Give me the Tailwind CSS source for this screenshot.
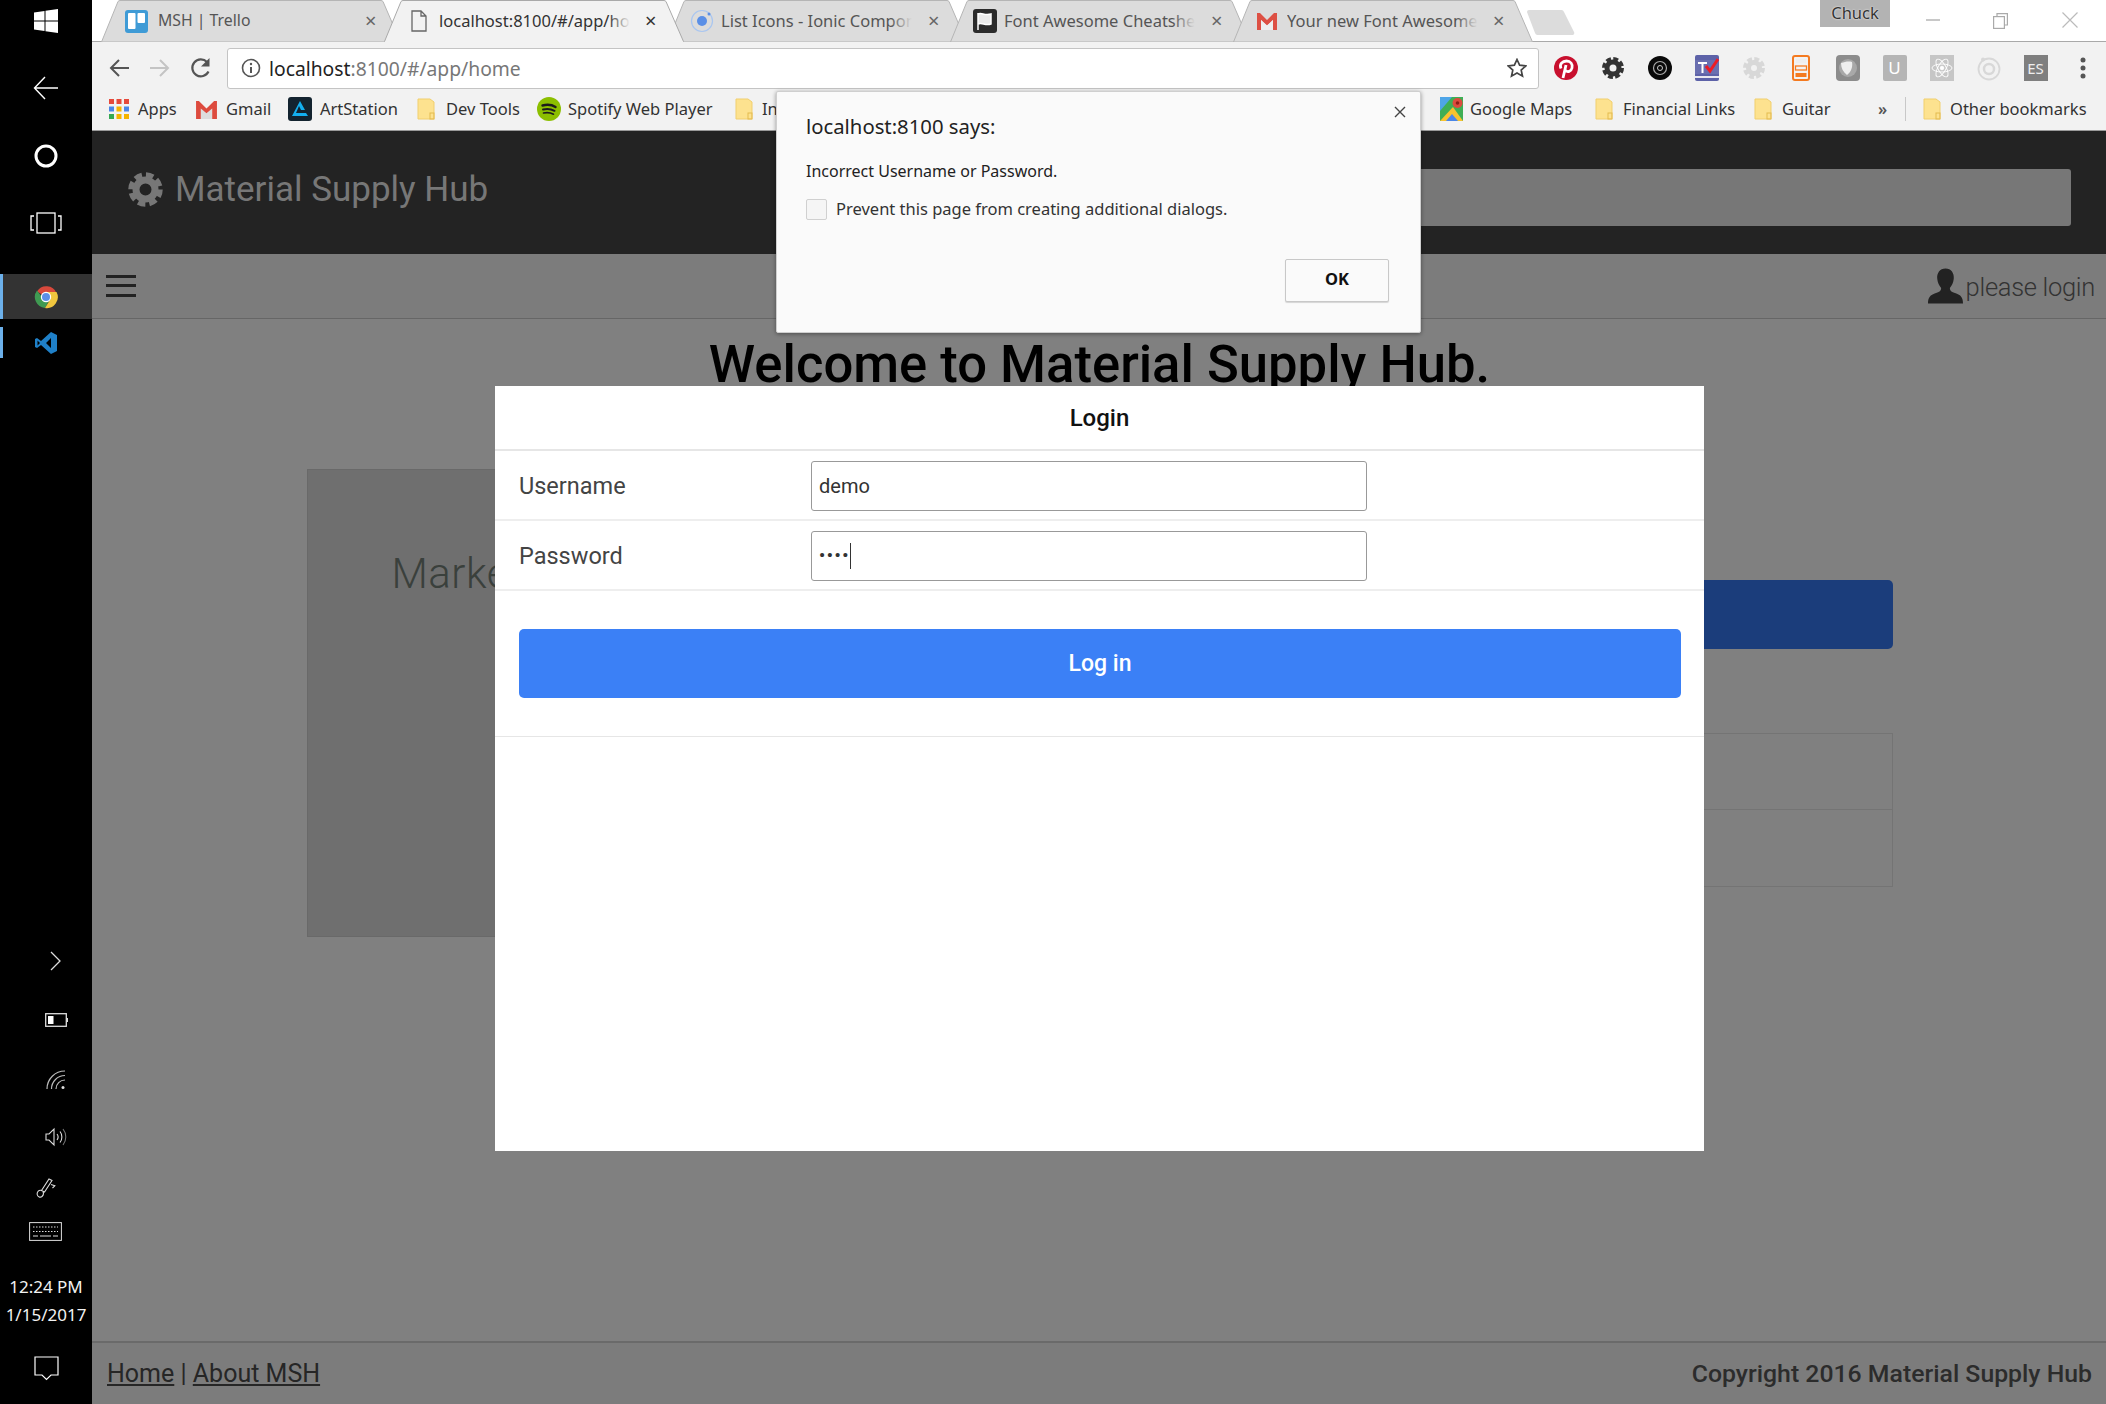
<!DOCTYPE html>
<html>
<head>
<meta charset="utf-8">
<script src="https://cdn.jsdelivr.net/npm/@tailwindcss/browser@4"></script>
<title>Material Supply Hub</title>
</head>
<body class="m-0 overflow-hidden bg-black">
<div class="relative flex w-[2106px] h-[1404px] overflow-hidden font-['Roboto',sans-serif]">

  <!-- Tablet-mode taskbar -->
  <aside class="flex flex-col w-[92px] h-full bg-black text-white shrink-0">
    <div class="flex items-center justify-center h-[42px]">
      <svg width="24" height="24" viewBox="0 0 24 24" fill="#fff"><path d="M0 3.5 10.5 2v9.500H0zM11.500 1.800 24 0v11.500H11.500zM0 12.500h10.500V22L0 20.500zM11.500 12.500H24V24l-12.500-1.800z"/></svg>
    </div>
    <div class="flex items-center justify-center h-[92px]">
      <svg width="26" height="24" viewBox="0 0 26 24" fill="none" stroke="#fff" stroke-width="1.400"><path d="M25 12H1.500M12 1 1.500 12 12 23"/></svg>
    </div>
    <div class="flex items-center justify-center h-[44px]">
      <svg width="24" height="24" viewBox="0 0 24 24" fill="none" stroke="#fff" stroke-width="3"><circle cx="12" cy="12" r="10"/></svg>
    </div>
    <div class="flex items-center justify-center h-[90px]">
      <svg width="32" height="22" viewBox="0 0 32 22" fill="none" stroke="#fff" stroke-width="1.300"><rect x="7" y="1" width="18" height="20"/><path d="M4 4H1v14h3M28 4h3v14h-3"/></svg>
    </div>
    <div class="flex items-center justify-center h-[45px] mt-[6px] bg-[#333] border-l-[3px] border-[#6cb0ea] pr-[3px]">
      <svg width="24" height="24" viewBox="0 0 24 24">
        <path d="M12 12 3 6.500A11 11 0 0 1 22.500 8H12z" fill="#d8493c"/>
        <path d="M3 5.500A11 11 0 0 0 11 23l5-9-4-2H8z" fill="#3f9a52"/>
        <path d="M12 7h10.500A11 11 0 0 1 11 23l5.500-9z" fill="#f0c63e"/>
        <circle cx="12" cy="12" r="5.200" fill="#fff"/><circle cx="12" cy="12" r="4" fill="#5b8fe8"/>
      </svg>
    </div>
    <div class="flex items-center justify-center h-[31px] mt-[8px] border-l-[3px] border-[#6cb0ea] pr-[3px]">
      <svg width="24" height="24" viewBox="0 0 24 24"><path d="M17 1 23 4v16l-6 3L7 14l-4 3-2-1V8l2-1 4 3zM17 7l-5 5 5 5zM3.500 9.500v5L6 12z" fill="#1f80c8" fill-rule="evenodd"/></svg>
    </div>
    <div class="flex-1"></div>
    <div class="flex items-center justify-center h-[44px] pl-[20px]">
      <svg width="12" height="20" viewBox="0 0 12 20" fill="none" stroke="#ddd" stroke-width="1.300"><path d="m1 1 9 9-9 9"/></svg>
    </div>
    <div class="flex items-center justify-center h-[74px] pl-[20px]">
      <svg width="23" height="14" viewBox="0 0 23 14" fill="none"><rect x=".7" y=".7" width="20.600" height="12.600" stroke="#ddd" stroke-width="1.300"/><rect x="3" y="3" width="5.500" height="8" fill="#fff"/><rect x="21.500" y="5" width="1.500" height="4" fill="#ddd"/></svg>
    </div>
    <div class="flex items-center justify-center h-[46px] pl-[20px]">
      <svg width="20" height="20" viewBox="0 0 20 20" fill="none" stroke="#bbb" stroke-width="1.200"><path d="M1 19A18 18 0 0 1 19 1M5.500 19A13.500 13.500 0 0 1 19 5.500M10 19a9 9 0 0 1 9-9"/><circle cx="17" cy="17.500" r="1.500" fill="#ddd" stroke="none"/></svg>
    </div>
    <div class="flex items-center justify-center h-[68px] pl-[20px]">
      <svg width="22" height="20" viewBox="0 0 22 20" fill="none" stroke="#ddd" stroke-width="1.100"><path d="M1 7h3l5-5v16l-5-5H1z"/><path d="M12 7c1.500 2 1.500 4 0 6M15 4.500c2.500 3 2.500 8 0 11"/><path d="M18 2c3.700 4.500 3.700 11.500 0 16" stroke="#777"/></svg>
    </div>
    <div class="flex items-center justify-center h-[34px] pr-[1px]">
      <svg width="20" height="20" viewBox="0 0 20 20" fill="none" stroke="#ddd" stroke-width="1.100"><path d="M13 1 16 2.500 8.500 14 5.500 12.500zM15 6.500l3.800 1.300-2.300 2.200M5.500 12.500C3 11.500.8 14 1.200 16.500S4.500 19.800 6 18.500s1.800-3 1-4.800"/></svg>
    </div>
    <div class="flex items-center justify-center h-[52px] pr-[1px]">
      <svg width="33" height="19" viewBox="0 0 33 19" fill="none" stroke="#ddd"><rect x=".6" y=".6" width="31.800" height="17.800"/><path d="M4 5h25M4 9.500h25" stroke-dasharray="1.500 1.500"/><path d="M4 14h5M11 14h11M24 14h5" stroke-width="1.200"/></svg>
    </div>
    <div class="flex flex-col items-center font-['Noto_Sans',sans-serif] text-[17px] leading-[28px] text-[#f2f2f2] pt-[16px]">
      <span class="whitespace-nowrap">12:24 PM</span>
      <span class="whitespace-nowrap">1/15/2017</span>
    </div>
    <div class="flex items-center justify-center h-[75px] pt-[3px]">
      <svg width="25" height="25" viewBox="0 0 25 25" fill="none" stroke="#fff" stroke-width="1.200"><path d="M1 1h23v18h-7l-4.500 4.500L8 19H1z"/></svg>
    </div>
  </aside>

  <main class="flex flex-col flex-1 min-w-0 bg-[#808080]">
    <!-- Browser chrome -->
    <div class="relative z-10 flex h-[42px] bg-white pl-[9px] font-['Noto_Sans',sans-serif] text-[16.500px]">
      <div class="absolute left-0 right-0 bottom-0 h-[1px] bg-[#a9a9a9]"></div>

      <div class="relative w-[300px] h-[42px] -mr-[17px] shrink-0 text-[#555]">
        <svg class="absolute inset-0" width="300" height="42" viewBox="0 0 300 42"><path d="M.5 42 17 1.500A3 3 0 0 1 19 .5h261a3 3 0 0 1 2 1L299.500 42z" fill="#dcdcdc" stroke="#b5b5b5"/></svg>
        <div class="relative flex items-center h-full pl-[24px]">
          <svg class="shrink-0" width="23" height="23" viewBox="0 0 23 23"><rect width="23" height="23" rx="3" fill="#3f9bd6"/><rect x="3" y="3" width="7.500" height="16" rx="1" fill="#fff"/><rect x="12.500" y="3" width="7.500" height="10" rx="1" fill="#fff"/></svg>
          <div class="w-[198px] ml-[10px] whitespace-nowrap overflow-hidden text-[15.800px]">MSH | Trello</div>
          <span class="ml-[9px] text-[20px] leading-none text-[#666]">×</span>
        </div>
      </div>

      <div class="relative z-10 w-[300px] h-[42px] -mr-[17px] shrink-0 text-[#333]">
        <svg class="absolute inset-0" width="300" height="42" viewBox="0 0 300 42"><path d="M0 41.500H.5L17 1.500A3 3 0 0 1 19 .5h261a3 3 0 0 1 2 1L299.500 41.500h.5v.5H0z" fill="#f2f2f2"/><path d="M0 41.500H.5L17 1.500A3 3 0 0 1 19 .5h261a3 3 0 0 1 2 1L299.500 41.500H300" fill="none" stroke="#a9a9a9"/></svg>
        <div class="relative flex items-center h-full pl-[27px]">
          <svg class="shrink-0" width="16" height="22" viewBox="0 0 16 22" fill="none" stroke="#666" stroke-width="1.300"><path d="M1 1h9l5 5v15H1zM10 1v5h5"/></svg>
          <div class="relative w-[191px] ml-[12px] whitespace-nowrap overflow-hidden">localhost:8100/#/app/home<div class="absolute right-0 top-0 bottom-0 w-[22px] bg-gradient-to-r from-transparent to-[#f2f2f2]"></div></div>
          <span class="ml-[15px] text-[20px] leading-none text-[#333]">×</span>
        </div>
      </div>

      <div class="relative w-[300px] h-[42px] -mr-[17px] shrink-0 text-[#555]">
        <svg class="absolute inset-0" width="300" height="42" viewBox="0 0 300 42"><path d="M.5 42 17 1.500A3 3 0 0 1 19 .5h261a3 3 0 0 1 2 1L299.500 42z" fill="#dcdcdc" stroke="#b5b5b5"/></svg>
        <div class="relative flex items-center h-full pl-[23px]">
          <svg class="shrink-0" width="24" height="24" viewBox="0 0 24 24" fill="none"><circle cx="12" cy="12" r="10.500" stroke="#a9c6f0" stroke-width="1.200"/><circle cx="12" cy="12" r="5" fill="#5a8fe6"/><circle cx="19" cy="5" r="1.500" fill="#5a8fe6"/></svg>
          <div class="relative w-[191px] ml-[7px] whitespace-nowrap overflow-hidden">List Icons - Ionic Components<div class="absolute right-0 top-0 bottom-0 w-[22px] bg-gradient-to-r from-transparent to-[#dcdcdc]"></div></div>
          <span class="ml-[16px] text-[20px] leading-none text-[#666]">×</span>
        </div>
      </div>

      <div class="relative w-[300px] h-[42px] -mr-[17px] shrink-0 text-[#555]">
        <svg class="absolute inset-0" width="300" height="42" viewBox="0 0 300 42"><path d="M.5 42 17 1.500A3 3 0 0 1 19 .5h261a3 3 0 0 1 2 1L299.500 42z" fill="#dcdcdc" stroke="#b5b5b5"/></svg>
        <div class="relative flex items-center h-full pl-[23px]">
          <svg class="shrink-0" width="24" height="24" viewBox="0 0 24 24"><rect width="24" height="24" rx="3" fill="#2b2b2b"/><path d="M5 4v17M5 5c4-2 6 2 13 0v10c-6 2-9-2-13 0z" stroke="#fff" stroke-width="1.500" fill="#fff" fill-opacity=".9"/></svg>
          <div class="relative w-[191px] ml-[7px] whitespace-nowrap overflow-hidden">Font Awesome Cheatsheet<div class="absolute right-0 top-0 bottom-0 w-[22px] bg-gradient-to-r from-transparent to-[#dcdcdc]"></div></div>
          <span class="ml-[16px] text-[20px] leading-none text-[#666]">×</span>
        </div>
      </div>

      <div class="relative w-[300px] h-[42px] shrink-0 text-[#555]">
        <svg class="absolute inset-0" width="300" height="42" viewBox="0 0 300 42"><path d="M.5 42 17 1.500A3 3 0 0 1 19 .5h261a3 3 0 0 1 2 1L299.500 42z" fill="#dcdcdc" stroke="#b5b5b5"/></svg>
        <div class="relative flex items-center h-full pl-[23px]">
          <svg class="shrink-0" width="22" height="22" viewBox="0 0 22 22"><path d="M1 3h3l7 7 7-7h3v17h-4V10l-6 5.500L5 10v10H1z" fill="#dd5044"/><path d="M5 10v10h12V10l-6 5.500z" fill="#eee"/></svg>
          <div class="relative w-[191px] ml-[9px] whitespace-nowrap overflow-hidden">Your new Font Awesome Kit<div class="absolute right-0 top-0 bottom-0 w-[22px] bg-gradient-to-r from-transparent to-[#dcdcdc]"></div></div>
          <span class="ml-[15px] text-[20px] leading-none text-[#666]">×</span>
        </div>
      </div>

      <svg class="ml-[-7px] mt-[10px] shrink-0 relative" width="50" height="25" viewBox="0 0 50 25"><path d="M1 2a2 2 0 0 1 2-2h32a3 3 0 0 1 3 2l10 20a2 2 0 0 1-2 3H12a3 3 0 0 1-3-2z" fill="#dcdcdc"/></svg>

      <div class="flex-1"></div>
      <div class="relative flex items-start justify-center w-[70px] h-[27px] bg-[#b3b3b3] text-[#333] text-[16.500px] leading-[25px] [text-shadow:0_0_2px_#fff] ml-[-8px]">Chuck</div>
      <div class="relative flex items-start w-[216px] h-[41px]">
        <svg class="absolute left-[36px] top-[19px]" width="14" height="2"><rect width="14" height="2" fill="#c8c8c8"/></svg>
        <svg class="absolute left-[103px] top-[13px]" width="15" height="16" viewBox="0 0 15 16" fill="none" stroke="#aaa" stroke-width="1.200"><rect x=".6" y="3.600" width="10.800" height="11.800"/><path d="M4 3.500V.6h10.400V12h-3"/></svg>
        <svg class="absolute left-[172px] top-[12px]" width="16" height="16" viewBox="0 0 16 16" fill="none" stroke="#bbb" stroke-width="1.200"><path d="m.5.500 15 15M15.500.500l-15 15"/></svg>
      </div>
    </div>

    <div class="relative flex items-center h-[46px] bg-[#f2f2f2] pl-[6px] pt-[6px]">
      <div class="flex items-center justify-center w-[41px]"><svg width="20" height="18" viewBox="0 0 20 18" fill="none" stroke="#555" stroke-width="2"><path d="M20 9H2M10 1 2 9l8 8"/></svg></div>
      <div class="flex items-center justify-center w-[41px]"><svg width="20" height="18" viewBox="0 0 20 18" fill="none" stroke="#c4c4c4" stroke-width="2"><path d="M0 9h18M10 1l8 8-8 8"/></svg></div>
      <div class="flex items-center justify-center w-[41px]"><svg width="22" height="22" viewBox="0 0 22 22" fill="none" stroke="#555" stroke-width="2.200"><path d="M18.500 14.500A8.500 8.500 0 1 1 17 5"/><path d="M19.500 1v8.500H11" stroke="none" fill="#555"/></svg></div>
      <div class="flex items-center justify-between w-[1312px] h-[41px] ml-[6px] bg-white border border-[#c4c4c4] rounded-[3px] pl-[13px] pr-[11px] font-['Noto_Sans',sans-serif]">
        <div class="flex items-center">
          <svg width="20" height="20" viewBox="0 0 20 20" fill="none" stroke="#555" stroke-width="1.600"><circle cx="10" cy="10" r="8.500"/><path d="M10 9v6" stroke-width="2"/><circle cx="10" cy="6" r="1.200" fill="#555" stroke="none"/></svg>
          <span class="ml-[8px] pt-[2px] text-[19.300px] text-[#777]"><span class="text-[#222]">localhost</span>:8100/#/app/home</span>
        </div>
        <svg width="20" height="20" viewBox="0 0 20 20" fill="none" stroke="#444" stroke-width="1.700"><path d="m10 1.500 2.600 5.700 6.200.7-4.600 4.200 1.300 6.100-5.500-3.100-5.500 3.100 1.300-6.100L1.200 7.900l6.200-.7z"/></svg>
      </div>
      <div class="flex items-center ml-[3px]">
        <div class="flex items-center justify-center w-[47px]"><svg width="24" height="24" viewBox="0 0 24 24"><circle cx="12" cy="12" r="12" fill="#c8102e"/><path d="M9 22l3-13M7 12.500C5 8 8.500 5 12.500 5S19 8 18 12c-.8 3.500-4.500 4.500-6.500 2.500" fill="none" stroke="#fff" stroke-width="2.800"/></svg></div>
        <div class="flex items-center justify-center w-[47px]"><svg width="22" height="22" viewBox="0 0 22 22" fill="none" stroke="#333"><circle cx="11" cy="11" r="6" stroke-width="5"/><circle cx="11" cy="11" r="9" stroke-width="4" stroke-dasharray="4.800 2.270"/></svg></div>
        <div class="flex items-center justify-center w-[47px]"><svg width="24" height="24" viewBox="0 0 24 24" fill="none"><circle cx="12" cy="12" r="12" fill="#0a0a0a"/><circle cx="12" cy="12" r="6.500" stroke="#aaa" stroke-width="1.200"/><circle cx="12" cy="12" r="2.500" stroke="#ccc"/></svg></div>
        <div class="flex items-center justify-center w-[47px]"><svg width="24" height="26" viewBox="0 0 24 26"><rect width="24" height="26" rx="2" fill="#5d62a8"/><rect y="5" width="24" height="14" fill="#6a6fb0"/><rect y="21" width="24" height="2" fill="#e8e8f0"/><path d="M3 7h9v2H8.500v9h-2V9H3z" fill="#fff"/><path d="m11 11 4 5 8-12" fill="none" stroke="#ee1c25" stroke-width="3"/></svg></div>
        <div class="flex items-center justify-center w-[47px]"><svg width="22" height="22" viewBox="0 0 22 22" fill="none" stroke="#d8d8d8"><circle cx="11" cy="11" r="5.500" stroke-width="5"/><circle cx="11" cy="11" r="9" stroke-width="4" stroke-dasharray="4.800 2.270"/></svg></div>
        <div class="flex items-center justify-center w-[47px]"><svg width="18" height="26" viewBox="0 0 18 26" fill="none" stroke="#f47a20" stroke-width="2"><rect x="1" y="1" width="16" height="24" rx="2"/><rect x="4" y="4" width="10" height="4" fill="#eee" stroke="none"/><rect x="3.500" y="11" width="11" height="4" stroke-width="1.300"/><rect x="3.500" y="18" width="11" height="4" fill="#f47a20" stroke="none"/></svg></div>
        <div class="flex items-center justify-center w-[47px]"><svg width="24" height="26" viewBox="0 0 24 26"><rect width="24" height="26" rx="4" fill="#8c8c8c"/><circle cx="12" cy="13" r="9" fill="#a8a8a8"/><path d="M5 8c4-1 7-2 11-1 1 5-1 10-5 13C7 17 5 13 5 8z" fill="#eee"/></svg></div>
        <div class="flex items-center justify-center w-[47px]"><div class="flex items-center justify-center w-[24px] h-[26px] bg-[#b5b5b5] rounded-[2px] text-white text-[17px] font-['Noto_Sans',sans-serif]">U</div></div>
        <div class="flex items-center justify-center w-[47px]"><svg width="24" height="26" viewBox="0 0 24 26" fill="none" stroke="#fff" stroke-width=".9"><rect width="24" height="26" fill="#c6c6c6" stroke="none"/><ellipse cx="12" cy="13" rx="10" ry="4"/><ellipse cx="12" cy="13" rx="10" ry="4" transform="rotate(60 12 13)"/><ellipse cx="12" cy="13" rx="10" ry="4" transform="rotate(-60 12 13)"/><circle cx="12" cy="13" r="1.800" fill="#fff"/></svg></div>
        <div class="flex items-center justify-center w-[47px]"><svg width="24" height="26" viewBox="0 0 24 26" fill="none" stroke="#d8d8d8" stroke-width="1.800"><circle cx="12" cy="14" r="10.500"/><circle cx="12" cy="14" r="5" stroke-width="2.500"/><circle cx="6" cy="4.500" r="2" fill="#d8d8d8" stroke="none"/></svg></div>
        <div class="flex items-center justify-center w-[47px]"><div class="flex items-center justify-center w-[24px] h-[26px] bg-[#7f7f7f] text-[#eee] text-[15px] font-['Noto_Sans',sans-serif]">ES</div></div>
        <div class="flex items-center justify-center w-[47px]"><svg width="6" height="22" viewBox="0 0 6 22" fill="#555"><circle cx="3" cy="3" r="2.500"/><circle cx="3" cy="11" r="2.500"/><circle cx="3" cy="19" r="2.500"/></svg></div>
      </div>
    </div>

    <div class="flex justify-between h-[43px] bg-[#f2f2f2] border-b border-[#9a9a9a] font-['Noto_Sans',sans-serif] text-[16.500px] text-[#333]">
      <div class="flex items-center pl-[17px]">
        <div class="flex items-center w-[87px] gap-[9px]"><svg width="20" height="20" viewBox="0 0 20 20"><g fill="#e64a3b"><rect width="5" height="5"/><rect x="7.500" width="5" height="5"/><rect x="15" width="5" height="5"/></g><g fill="#4a86e8"><rect y="7.500" width="5" height="5"/></g><rect x="7.500" y="7.500" width="5" height="5" fill="#f5b400"/><rect x="15" y="7.500" width="5" height="5" fill="#4a86e8"/><rect y="15" width="5" height="5" fill="#35a853"/><rect x="7.500" y="15" width="5" height="5" fill="#f5b400"/><rect x="15" y="15" width="5" height="5" fill="#f5b400"/></svg>Apps</div>
        <div class="flex items-center w-[92px] gap-[9px]"><svg width="21" height="19" viewBox="0 0 22 20"><path d="M5 9v11h12V9l-6 5z" fill="#ddd"/><path d="M0 1h3l8 8 8-8h3v19h-5V9l-6 5-6-5v11H0z" fill="#dd4b3e"/></svg>Gmail</div>
        <div class="flex items-center w-[129px] gap-[8px]"><svg width="24" height="24" viewBox="0 0 24 24"><rect width="24" height="24" rx="3" fill="#13232f"/><path d="M12 4l5 9h-4l-2-4-3 7h10l2 3H4z" fill="#13aff0"/></svg>ArtStation</div>
        <div class="flex items-center w-[120px] gap-[11px]"><svg width="18" height="22" viewBox="0 0 18 22"><path d="M1 1h12l4 3v17H1z" fill="#fde28f" stroke="#f1cf6e"/><rect x="13" y="15" width="4" height="6" fill="none" stroke="#e4bb50"/></svg>Dev Tools</div>
        <div class="flex items-center w-[198px] gap-[7px]"><svg width="24" height="24" viewBox="0 0 24 24" fill="none" stroke="#1c1c1c" stroke-linecap="round"><circle cx="12" cy="12" r="12" fill="#8cbf00" stroke="none"/><path d="M5.500 8.500c4-1 9-1 13 1.500" stroke-width="2.400"/><path d="M6 12.500c4-1 8-.6 11.500 1.300" stroke-width="2"/><path d="M6.500 16c3.500-.7 7-.4 10 1.200" stroke-width="1.600"/></svg><span class="whitespace-nowrap">Spotify Web Player</span></div>
        <div class="flex items-center w-[60px] gap-[9px]"><svg width="18" height="22" viewBox="0 0 18 22"><path d="M1 1h12l4 3v17H1z" fill="#fde28f" stroke="#f1cf6e"/><rect x="13" y="15" width="4" height="6" fill="none" stroke="#e4bb50"/></svg>In</div>
      </div>
      <div class="flex items-center">
        <div class="flex items-center w-[155px] gap-[7px] whitespace-nowrap"><svg width="23" height="24" viewBox="0 0 23 24"><rect width="23" height="24" fill="#3fae55"/><path d="M0 24 13 10l10 14z" fill="#f7c22e"/><path d="M6 24l6-7 6 7z" fill="#4a86e8"/><path d="M0 0h12L0 14z" fill="#4ea5e8"/><circle cx="17.500" cy="6" r="5" fill="#dd4b3e"/><circle cx="17.500" cy="6" r="1.800" fill="#8e1f16"/></svg>Google Maps</div>
        <div class="flex items-center w-[159px] gap-[10px] whitespace-nowrap"><svg width="18" height="22" viewBox="0 0 18 22"><path d="M1 1h12l4 3v17H1z" fill="#fde28f" stroke="#f1cf6e"/><rect x="13" y="15" width="4" height="6" fill="none" stroke="#e4bb50"/></svg>Financial Links</div>
        <div class="flex items-center w-[121px] gap-[10px]"><svg width="18" height="22" viewBox="0 0 18 22"><path d="M1 1h12l4 3v17H1z" fill="#fde28f" stroke="#f1cf6e"/><rect x="13" y="15" width="4" height="6" fill="none" stroke="#e4bb50"/></svg>Guitar</div>
        <div class="w-[30px] text-[16px] font-semibold text-[#555] pl-[3px]">»</div>
        <div class="w-[1px] h-[24px] bg-[#c8c8c8]"></div>
        <div class="flex items-center w-[183px] ml-[17px] gap-[9px] whitespace-nowrap"><svg width="18" height="22" viewBox="0 0 18 22"><path d="M1 1h12l4 3v17H1z" fill="#fde28f" stroke="#f1cf6e"/><rect x="13" y="15" width="4" height="6" fill="none" stroke="#e4bb50"/></svg>Other bookmarks</div>
      </div>
    </div>

    <!-- Page (dimmed by the modal) -->
    <header class="flex items-center justify-between h-[123px] bg-[#232323] pl-[36px] pr-[35px]">
      <div class="flex items-center gap-[12px] text-[35px] text-[#777] pb-[6px]">
        <svg width="35" height="35" viewBox="0 0 35 35" fill="none" stroke="#777"><circle cx="17.500" cy="17.500" r="9.500" stroke-width="7"/><circle cx="17.500" cy="17.500" r="14.500" stroke-width="5.500" stroke-dasharray="7.400 3.990"/></svg>
        <span class="leading-none whitespace-nowrap">Material Supply Hub</span>
      </div>
      <div class="w-[1100px] h-[57px] mt-[10px] bg-[#777] rounded-[3px]"></div>
    </header>
    <nav class="flex items-center justify-between h-[65px] bg-[#7c7c7c] border-b border-[#666] pl-[14px] pr-[11px] text-[#333]">
      <svg width="30" height="22" viewBox="0 0 30 22" fill="#222"><rect width="30" height="3"/><rect y="9" width="30" height="3"/><rect y="19" width="30" height="3"/></svg>
      <div class="flex items-end">
        <svg width="35" height="36" viewBox="0 0 36 36" fill="#222"><path d="M18 0c6 0 9 5 8.500 10.500-.4 4-2 7-4 9.500 0 3 1.500 4 6 5.500 5 1.800 7.500 4 7.500 10.500H0c0-6.500 2.500-8.700 7.500-10.500 4.500-1.500 6-2.500 6-5.500-2-2.500-3.600-5.500-4-9.500C9 5 12 0 18 0z"/></svg>
        <span class="ml-[3px] text-[25.500px] font-light leading-[34px] whitespace-nowrap tracking-[-0.3px]">please login</span>
      </div>
    </nav>
    <div class="flex flex-col flex-1 items-center pl-[1px]">
      <h1 class="mt-[14px] text-[52.600px] font-medium leading-[62px] text-black whitespace-nowrap">Welcome to Material Supply Hub.</h1>
      <div class="flex justify-between w-[1586px] mt-[74px]">
        <div class="w-[700px] h-[468px] bg-[#6f6f6f] border border-[#696969] pl-[84px] pt-[79px] text-[42px] font-light leading-[50px] text-[#3a403c] tracking-[0.5px]">Marketplace</div>
        <div class="flex flex-col w-[700px] pt-[111px]">
          <div class="h-[69px] bg-[#1b3d7b] rounded-[5px]"></div>
          <div class="mt-[84px] border border-[#747474]">
            <div class="h-[76px] border-b border-[#747474]"></div>
            <div class="h-[76px]"></div>
          </div>
        </div>
      </div>
    </div>
    <footer class="flex items-center justify-between h-[63px] bg-[#7c7c7c] border-t-2 border-[#6a6a6a] pl-[15px] pr-[14px] text-[25px] text-[#262626]">
      <div class="font-normal"><a class="underline">Home</a> | <a class="underline">About MSH</a></div>
      <div class="font-medium text-[#2c2c2c] text-[24.800px]">Copyright 2016 Material Supply Hub</div>
    </footer>
  </main>

  <!-- Login modal -->
  <section class="absolute left-[495px] top-[386px] z-20 w-[1209px] h-[765px] bg-white">
    <div class="flex items-center justify-center h-[65px] border-b-2 border-[#e6e6e6] text-[24px] font-medium text-[#111]">Login</div>
    <div class="flex items-center h-[70px] border-b-2 border-[#eee] pl-[24px] pt-[2px] text-[23.500px] text-[#444]">
      <span class="w-[292px] pt-[2px]">Username</span>
      <div class="flex items-center w-[556px] h-[50px] bg-white border border-[#999] rounded-[3px] pl-[7px] text-[20px] text-[#333]">demo</div>
    </div>
    <div class="flex items-center h-[70px] border-b-2 border-[#eee] pl-[24px] pt-[2px] text-[23.500px] text-[#444]">
      <span class="w-[292px] pt-[2px]">Password</span>
      <div class="flex items-center w-[556px] h-[50px] bg-white border border-[#999] rounded-[3px] pl-[7px] text-[20px] text-[#333]"><span class="text-[17px] font-bold tracking-[1.600px]">••••</span><span class="w-[1px] h-[26px] bg-[#333]"></span></div>
    </div>
    <div class="border-b border-[#e6e6e6] pl-[24px] pr-[23px] pt-[38px] pb-[38px]">
      <div class="flex items-center justify-center h-[69px] pt-[2px] bg-[#3b80f6] rounded-[5px] text-[23px] font-medium text-white">Log in</div>
    </div>
  </section>

  <!-- JavaScript alert dialog -->
  <section class="absolute left-[776px] top-[91px] z-30 w-[645px] h-[242px] bg-[#fafafa] border border-[#cfcfcf] rounded-[2px] shadow-[0_1px_4px_rgba(0,0,0,0.4)] pl-[29px] pt-[20px] font-['Noto_Sans',sans-serif] text-[#222]">
    <svg class="absolute right-[14px] top-[14px]" width="12" height="12" viewBox="0 0 12 12" fill="none" stroke="#444" stroke-width="1.400"><path d="m1 1 10 10M11 1 1 11"/></svg>
    <div class="text-[20.300px] leading-[28px] whitespace-nowrap">localhost:8100 says:</div>
    <div class="mt-[19px] text-[16px] leading-[24px] whitespace-nowrap">Incorrect Username or Password.</div>
    <div class="flex items-center mt-[14px]">
      <div class="w-[21px] h-[21px] bg-[#f5f5f5] border border-[#d0d0d0] rounded-[2px]"></div>
      <span class="ml-[9px] text-[16.500px] leading-[24px] text-[#333] whitespace-nowrap">Prevent this page from creating additional dialogs.</span>
    </div>
    <div class="absolute right-[31px] bottom-[30px] flex items-center justify-center w-[104px] h-[43px] pb-[2px] bg-[#fafafa] border border-[#c8c8c8] rounded-[2px] shadow-[0_1px_1px_rgba(0,0,0,0.15)] text-[16.500px] font-bold text-[#111]">OK</div>
  </section>
</div>
</body>
</html>
